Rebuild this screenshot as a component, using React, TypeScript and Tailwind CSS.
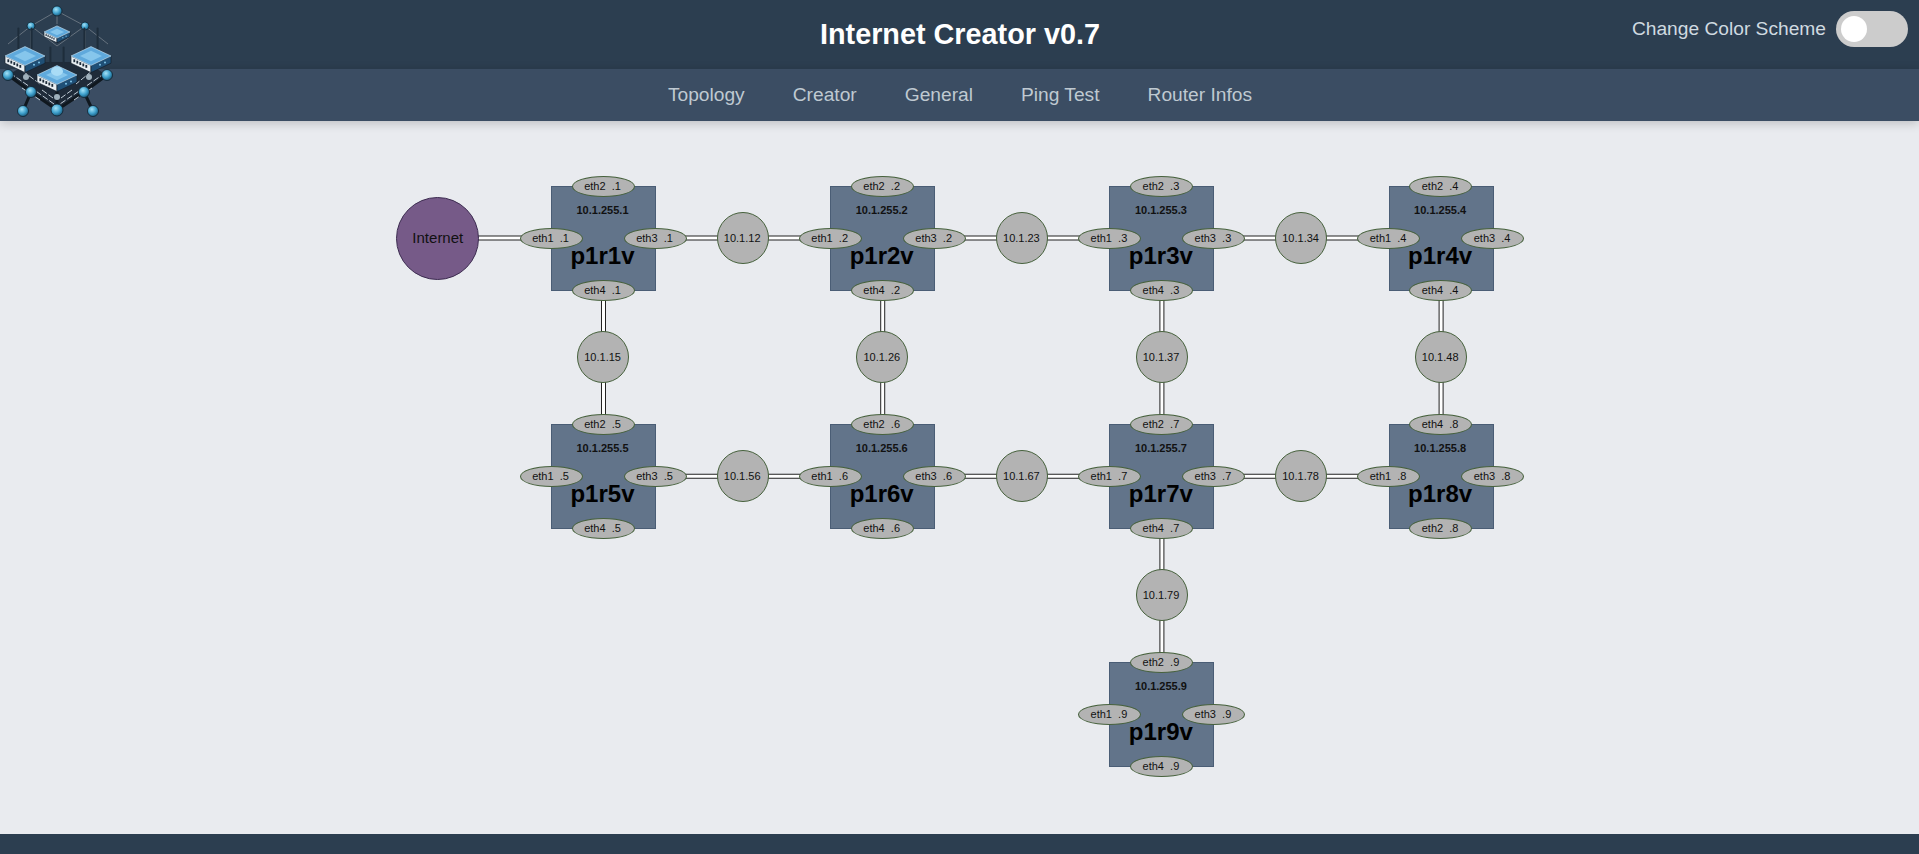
const routers = [
  { id: 1, c: 0, r: 0 },
  { id: 2, c: 1, r: 0 },
  { id: 3, c: 2, r: 0 },
  { id: 4, c: 3, r: 0 },
  { id: 5, c: 0, r: 1 },
  { id: 6, c: 1, r: 1 },
  { id: 7, c: 2, r: 1 },
  { id: 8, c: 3, r: 1, swap: true },
  { id: 9, c: 2, r: 2 },
];

const links = [
  { name: "10.1.12", c: 0.5, r: 0 },
  { name: "10.1.23", c: 1.5, r: 0 },
  { name: "10.1.34", c: 2.5, r: 0 },
  { name: "10.1.15", c: 0, r: 0.5 },
  { name: "10.1.26", c: 1, r: 0.5 },
  { name: "10.1.37", c: 2, r: 0.5 },
  { name: "10.1.48", c: 3, r: 0.5 },
  { name: "10.1.56", c: 0.5, r: 1 },
  { name: "10.1.67", c: 1.5, r: 1 },
  { name: "10.1.78", c: 2.5, r: 1 },
  { name: "10.1.79", c: 2, r: 1.5 },
];

const X0 = 603.5;
const Y0 = 117;
const DX = 279.2;
const DY = 238.2;
const px = (c: number) => X0 + c * DX;
const py = (r: number) => Y0 + r * DY;

const Oval = ({ x, y, label, ip }: { x: number; y: number; label: string; ip: number }) => (
  <div
    className="absolute w-[63px] h-[21px] -ml-[31.5px] -mt-[10.5px] pr-[1px] rounded-[50%] bg-[#b3b3b3] border border-[#46613c] flex items-center justify-center text-[11px] text-[#111] whitespace-pre"
    style={{ left: x - 0.5, top: y }}
  >
    {label}  .{ip}
  </div>
);

const RouterNode = ({ id, c, r, swap }: { id: number; c: number; r: number; swap?: boolean }) => {
  const x = px(c);
  const y = py(r);
  return (
    <>
      <div
        className="absolute w-[105px] h-[105px] -ml-[52.5px] -mt-[52.5px] pr-[2px] bg-[#62748a] border border-[#4a5d75] flex flex-col items-center"
        style={{ left: x, top: y }}
      >
        <span className="mt-[17px] text-[11px] leading-[13px] font-bold text-[#111]">10.1.255.{id}</span>
        <span className="mt-[25px] text-[24px] leading-[28px] font-bold text-black">p1r{id}v</span>
      </div>
      <Oval x={x - 52} y={y} label="eth1" ip={id} />
      <Oval x={x} y={y - 52} label={swap ? "eth4" : "eth2"} ip={id} />
      <Oval x={x + 52} y={y} label="eth3" ip={id} />
      <Oval x={x} y={y + 52} label={swap ? "eth2" : "eth4"} ip={id} />
    </>
  );
};

const Edge = ({ x1, y1, x2, y2 }: { x1: number; y1: number; x2: number; y2: number }) => (
  <>
    <line x1={x1} y1={y1} x2={x2} y2={y2} stroke="#222222" strokeWidth={5} />
    <line x1={x1} y1={y1} x2={x2} y2={y2} stroke="#ffffff" strokeWidth={3} />
  </>
);

const MiniRouter = ({ x, y, w = 20, big, bare }: { x: number; y: number; w?: number; big?: boolean; bare?: boolean }) => {
  const h = w * 0.47;
  const t = w * 0.36;
  const slots = [0.12, 0.27, 0.42, 0.57, 0.72];
  return (
    <g>
      {!bare && (
        <>
          <line x1={x - w * 0.33} y1={y - h * 0.1} x2={x - w * 0.33} y2={y - h - w * 0.9} stroke="#1e2d3b" strokeWidth={2} strokeLinecap="round" />
          <line x1={x + w * 0.33} y1={y - h * 0.1} x2={x + w * 0.33} y2={y - h - w * 0.9} stroke="#1e2d3b" strokeWidth={2} strokeLinecap="round" />
        </>
      )}
      <polygon points={`${x - w},${y} ${x},${y + h} ${x},${y + h + t} ${x - w},${y + t}`} fill="#e8eef2" stroke="#14202c" strokeWidth="0.7" />
      <polygon points={`${x + w},${y} ${x},${y + h} ${x},${y + h + t} ${x + w},${y + t}`} fill="#1f4f76" stroke="#14202c" strokeWidth="0.7" />
      <polygon points={`${x - w},${y} ${x},${y - h} ${x + w},${y} ${x},${y + h}`} fill="#5fa9dc" stroke="#cfe7f6" strokeWidth="0.6" />
      <polygon points={`${x - w * 0.55},${y} ${x},${y - h * 0.55} ${x + w * 0.55},${y} ${x},${y + h * 0.55}`} fill="#86c6ec" />
      {big && <ellipse cx={x} cy={y - h * 0.4} rx={w * 0.3} ry={h * 0.5} fill="#a9dcf6" />}
      {slots.map((s) => (
        <rect key={s} x={x - w + s * w} y={y + t * 0.3 + s * h} width={w * 0.09} height={t * 0.4} fill="#1c2a38" />
      ))}
      <circle cx={x + w * 0.45} cy={y + h * 0.55 + t * 0.5} r={w * 0.05} fill="#7fc4ea" />
      <circle cx={x + w * 0.7} cy={y + h * 0.3 + t * 0.5} r={w * 0.05} fill="#7fc4ea" />
    </g>
  );
};

const Dot = ({ x, y, r = 5.5 }: { x: number; y: number; r?: number }) => (
  <circle cx={x} cy={y} r={r} fill="url(#logo-ball)" stroke="#10222f" strokeWidth="0.8" />
);

const Logo = () => (
  <svg viewBox="0 0 130 130" className="absolute left-0 top-0 w-[130px] h-[130px]">
    <defs>
      <radialGradient id="logo-ball" cx="0.4" cy="0.35" r="0.7">
        <stop offset="0" stopColor="#a4e2f7" />
        <stop offset="0.55" stopColor="#3d9fcb" />
        <stop offset="1" stopColor="#17506f" />
      </radialGradient>
    </defs>
    <g stroke="#66727e" strokeWidth="1" fill="none">
      <path d="M57 11 L31 26 L8 44 M57 11 L85 26 L108 44 M31 26 L57 46 L85 26 M57 11 V24" />
      <path d="M31 26 V50 M85 26 V50" />
    </g>
    <polygon points="8,75 30,62 85,62 107,75 57,110" fill="#1f2b39" />
    <g stroke="#10181f" strokeWidth="3" fill="none">
      <path d="M8 75 L31 92 L57 110 L84 92 L107 75" />
      <path d="M23 111 L31 92 M93 111 L84 92 M57 110 V90" />
    </g>
    <g stroke="#d3dee6" strokeWidth="0.9" fill="none" strokeDasharray="6 2">
      <path d="M10 73 L33 89 L54 104" />
      <path d="M105 73 L82 89 L60 104" />
      <path d="M16 66 L40 84 M98 66 L76 84" />
      <path d="M22 88 L40 100 M92 88 L74 100" />
      <path d="M42 90 L53 98 M72 90 L61 98" />
    </g>
    <Dot x={57} y={11} r={5} />
    <Dot x={31} y={26} r={4} />
    <Dot x={85} y={26} r={4} />
    <MiniRouter x={57} y={32} w={13} bare />
    <MiniRouter x={25} y={56} />
    <MiniRouter x={91} y={56} />
    <Dot x={8} y={75} />
    <Dot x={107} y={75} />
    <circle cx={26} cy={77} r={3} fill="#9fb0bb" />
    <circle cx={89} cy={77} r={3} fill="#9fb0bb" />
    <MiniRouter x={57} y={75} big />
    <circle cx={57} cy={97} r={3} fill="#9fb0bb" />
    <Dot x={31} y={92} />
    <Dot x={84} y={92} />
    <Dot x={23} y={111} />
    <Dot x={93} y={111} />
    <Dot x={57} y={110} r={6} />
  </svg>
);

const App = () => {
  const navItems = ["Topology", "Creator", "General", "Ping Test", "Router Infos"];
  return (
    <div className="relative h-[854px] flex flex-col bg-[#e9ebef] font-['Liberation_Sans',Arial,sans-serif] overflow-hidden">
      <header className="h-[69px] shrink-0 bg-[#2c3e50] relative flex items-center justify-center pl-[1px]">
        <h1 className="text-[28.8px] font-bold text-white">Internet Creator v0.7</h1>
        <div className="absolute right-[11px] top-[11px] flex items-center gap-[10px]">
          <span className="mt-[1px] text-[19.2px] text-[#d0dae0]">Change Color Scheme</span>
          <div className="w-[72px] h-[36px] rounded-full bg-[#cccccc] flex items-center pl-[5px]">
            <div className="w-[26px] h-[26px] rounded-full bg-white" />
          </div>
        </div>
      </header>
      <nav className="h-[52px] shrink-0 bg-[#3b4d63] flex items-center justify-center gap-[48px] pl-[1px] shadow-[0_2px_10px_rgba(0,0,0,0.2)] relative">
        {navItems.map((item) => (
          <a key={item} className="text-[19.2px] text-[#bfc9d1]">
            {item}
          </a>
        ))}
      </nav>
      <Logo />
      <main className="relative flex-1">
        <svg className="absolute inset-0 w-full h-full">
          <Edge x1={437} y1={py(0)} x2={px(0) - 52} y2={py(0)} />
          {[0, 1].map((r) => (
            <Edge key={r} x1={px(0) + 52} y1={py(r)} x2={px(3) - 52} y2={py(r)} />
          ))}
          {[0, 1, 2, 3].map((c) => (
            <Edge key={c} x1={px(c)} y1={py(0) + 52} x2={px(c)} y2={py(1) - 52} />
          ))}
          <Edge x1={px(2)} y1={py(1) + 52} x2={px(2)} y2={py(2) - 52} />
        </svg>
        <div
          className="absolute w-[83px] h-[83px] -ml-[41.5px] -mt-[41.5px] rounded-full bg-[#765a88] border border-[#3c2b50] flex items-center justify-center text-[15px] text-[#111]"
          style={{ left: 437.8, top: py(0) }}
        >
          Internet
        </div>
        {links.map((l) => (
          <div
            key={l.name}
            className="absolute w-[52px] h-[52px] -ml-[26px] -mt-[26px] pr-[1px] rounded-full bg-[#b3b3b3] border border-[#46613c] flex items-center justify-center text-[11px] text-[#111]"
            style={{ left: px(l.c) - 0.4, top: py(l.r) }}
          >
            {l.name}
          </div>
        ))}
        {routers.map((n) => (
          <RouterNode key={n.id} {...n} />
        ))}
      </main>
      <footer className="h-[20px] shrink-0 bg-[#2c3e50]" />
    </div>
  );
};

export default App;
